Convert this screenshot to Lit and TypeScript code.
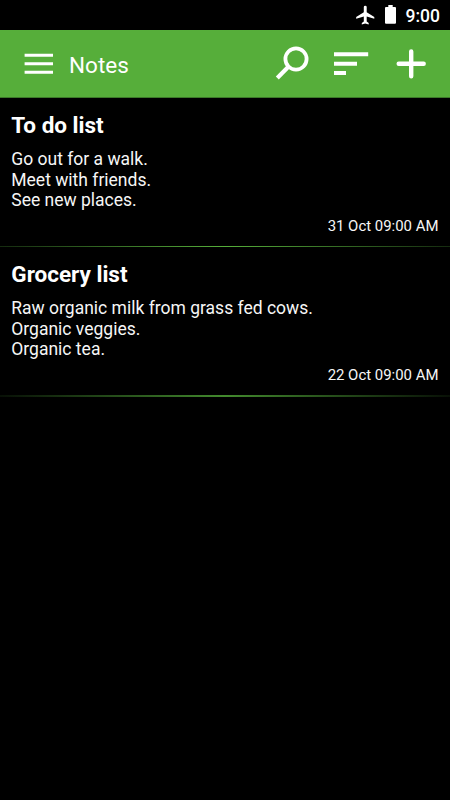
import { LitElement, html, css, svg } from "lit";
import { customElement } from "lit/decorators.js";

interface Note {
  title: string;
  lines: string[];
  date: string;
}

const notes: Note[] = [
  {
    title: "To do list",
    lines: ["Go out for a walk.", "Meet with friends.", "See new places."],
    date: "31 Oct 09:00 AM",
  },
  {
    title: "Grocery list",
    lines: ["Raw organic milk from grass fed cows.", "Organic veggies.", "Organic tea."],
    date: "22 Oct 09:00 AM",
  },
];

const icon = (w: number, h: number, body: unknown) =>
  html`<svg width=${w} height=${h} viewBox="0 0 ${w} ${h}" fill="none">${body}</svg>`;

const airplane = icon(20, 20, svg`<path fill="#fff" d="M19.3 13.8v-1.9L11.7 7.2V2.1a1.45 1.45 0 0 0-2.9 0v5.1L1.2 11.9v1.9l7.6-2.35v5.1L6.8 18v1.5l3.45-1 3.45 1V18l-2-1.45v-5.1z"/>`);
const battery = icon(11, 19, svg`<path fill="#fff" d="M3.3 0h4.4v2H10a1 1 0 0 1 1 1v14.7a1 1 0 0 1-1 1H1a1 1 0 0 1-1-1V3a1 1 0 0 1 1-1h2.3z"/>`);
const menu = icon(30, 22, svg`<path stroke="#fff" stroke-width="2.9" d="M.6 2.2H29M.6 10.8H29M.6 19.2H29"/>`);
const search = icon(34, 34, svg`<circle cx="21" cy="13" r="10.6" stroke="#fff" stroke-width="3.8"/><path stroke="#fff" stroke-width="4.2" d="M13.4 20.8 2.3 31.9"/>`);
const sort = icon(36, 24, svg`<path stroke="#fff" stroke-width="4" d="M1 2.3H35.2M1 11.8H24M1 21.1H13"/>`);
const plus = icon(30, 30, svg`<path stroke="#fff" stroke-width="4.4" stroke-linecap="round" d="M15.2 2.4V27.3M2.7 14.8H27.7"/>`);

@customElement("note-card")
export class NoteCard extends LitElement {
  static properties = { note: { attribute: false } };
  declare note: Note;

  static styles = css`
    :host { display: block; }
    .card {
      box-sizing: border-box;
      height: 148px;
      padding: 13.3px 11.5px 0 11.3px;
      display: flex;
      flex-direction: column;
    }
    .title { font-size: 22.5px; line-height: 28px; font-weight: 700; color: #fff; }
    .body { margin-top: 9.7px; font-size: 17.5px; line-height: 20.7px; color: #f6f6f6; }
    .date { margin-top: 5.9px; align-self: flex-end; font-size: 14.95px; line-height: 18px; color: #f6f6f6; }
  `;

  render() {
    return html`<article class="card">
      <div class="title">${this.note.title}</div>
      <div class="body">${this.note.lines.map((l) => html`<div>${l}</div>`)}</div>
      <div class="date">${this.note.date}</div>
    </article>`;
  }
}

@customElement("app-root")
export class AppRoot extends LitElement {
  static styles = css`
    :host {
      display: flex;
      flex-direction: column;
      height: 800px;
      background: #000;
      color: #fff;
      font-family: Roboto, sans-serif;
      overflow: hidden;
    }
    svg { display: block; flex: none; }
    .status {
      box-sizing: border-box;
      height: 30px;
      display: flex;
      justify-content: flex-end;
      padding: 5px 10px 0 0;
    }
    .battery { margin-left: 10px; }
    .clock { margin-left: 10px; font-size: 17.5px; line-height: 22px; font-weight: 500; }
    .bar {
      box-sizing: border-box;
      height: 68px;
      display: flex;
      align-items: flex-start;
      padding: 16px 24px 0 24px;
      background: #56ae3a;
      border-bottom: 1px solid #3c7929;
    }
    .menu { margin-top: 7px; }
    .heading { flex: 1; margin-left: 15px; font-size: 22.5px; line-height: 38px; }
    .sort { margin: 6px 0 0 24px; }
    .plus { margin: 3px 0 0 27px; }
    .rule { height: 1px; background: linear-gradient(90deg, #152b0f, #56ae3a 50%, #152b0f); }
    .rule.soft { height: 2px; background: linear-gradient(90deg, #081006, #438a2e 50%, #081006); }
  `;

  render() {
    return html`
      <div class="status">
        ${airplane}
        <div class="battery">${battery}</div>
        <div class="clock">9:00</div>
      </div>
      <header class="bar">
        <div class="menu">${menu}</div>
        <div class="heading">Notes</div>
        <div class="search">${search}</div>
        <div class="sort">${sort}</div>
        <div class="plus">${plus}</div>
      </header>
      <main class="list">
        ${notes.map(
          (n, i) => html`<note-card .note=${n}></note-card>
            <div class="rule ${i === notes.length - 1 ? "soft" : ""}"></div>`,
        )}
      </main>
    `;
  }
}
